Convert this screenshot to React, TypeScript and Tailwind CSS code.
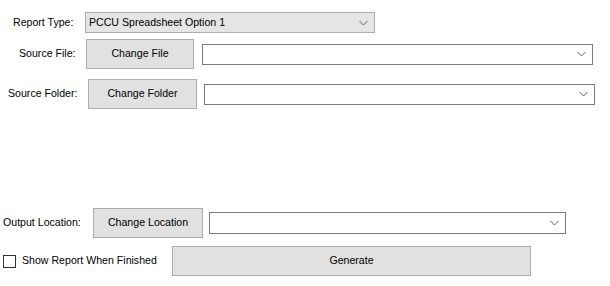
import React from "react";

const Chevron = () => (
  <svg width="9" height="6" viewBox="0 0 9 6" className="shrink-0">
    <polyline points="0.5,1 4.5,5 8.5,1" fill="none" stroke="#606060" strokeWidth="1" />
  </svg>
);

const Btn = ({ w, children }: { w: string; children: React.ReactNode }) => (
  <div className={`${w} h-[30px] shrink-0 bg-[#e1e1e1] border border-[#adadad] flex items-center justify-center text-black`}>
    {children}
  </div>
);

export default function App() {
  return (
    <div
      className="w-[610px] h-[286px] bg-white text-[10.6px] text-black overflow-hidden"
      style={{ fontFamily: '"Liberation Sans", Arial, sans-serif' }}
    >
      <div className="flex items-center h-[21px] mt-[12px]">
        <div className="w-[85px] pl-[13px] shrink-0">Report Type:</div>
        <div className="w-[290px] h-[21px] bg-[#e5e5e5] border border-[#adadad] flex items-center pl-[3px] pr-[6px]">
          <span className="flex-1">PCCU Spreadsheet Option 1</span>
          <Chevron />
        </div>
      </div>

      <div className="flex items-center h-[30px] mt-[6px]">
        <div className="w-[86px] pl-[19px] shrink-0">Source File:</div>
        <Btn w="w-[108px]">Change File</Btn>
        <div className="ml-[8px] w-[391px] h-[21px] bg-white border border-[#7a7a7a] flex items-center justify-end pr-[6px]">
          <Chevron />
        </div>
      </div>

      <div className="flex items-center h-[30px] mt-[10px]">
        <div className="w-[88px] pl-[8px] shrink-0">Source Folder:</div>
        <Btn w="w-[109px]">Change Folder</Btn>
        <div className="ml-[7px] w-[391px] h-[21px] bg-white border border-[#7a7a7a] flex items-center justify-end pr-[6px]">
          <Chevron />
        </div>
      </div>

      <div className="flex items-center h-[30px] mt-[99px]">
        <div className="w-[93px] pl-[3px] shrink-0">Output Location:</div>
        <Btn w="w-[110px]">Change Location</Btn>
        <div className="ml-[6px] w-[357px] h-[22px] bg-white border border-[#7a7a7a] flex items-center justify-end pr-[6px]">
          <Chevron />
        </div>
      </div>

      <div className="flex items-center h-[30px] mt-[8px]">
        <div className="ml-[3px] w-[13px] h-[13px] border border-[#333333] bg-white shrink-0" />
        <div className="ml-[6px] w-[150px] shrink-0">Show Report When Finished</div>
        <div className="w-[359px] h-[30px] bg-[#e1e1e1] border border-[#adadad] flex items-center justify-center">
          Generate
        </div>
      </div>
    </div>
  );
}
